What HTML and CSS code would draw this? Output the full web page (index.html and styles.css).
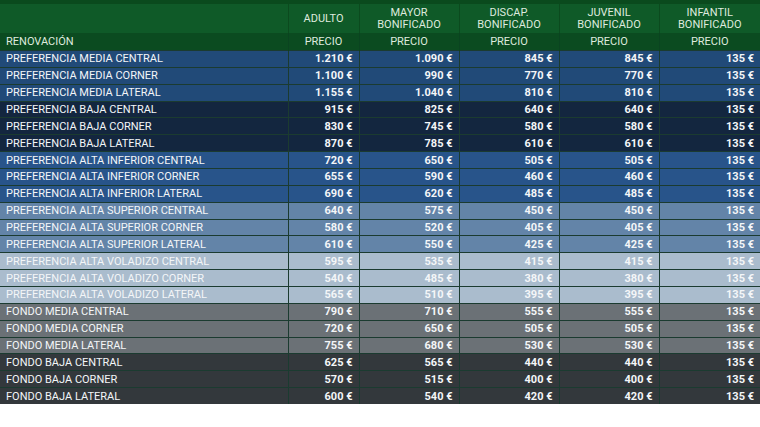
FILE: index.html
```html
<!DOCTYPE html>
<html lang="es">
<head>
<meta charset="utf-8">
<title>Precios renovación</title>
<link rel="stylesheet" href="styles.css">
</head>
<body>
<table class="prices">
  <colgroup>
    <col class="c-name"><col class="c-a"><col class="c-b"><col class="c-b"><col class="c-b"><col class="c-last">
  </colgroup>
  <thead>
    <tr class="h1">
      <th></th><th>ADULTO</th><th>MAYOR<br>BONIFICADO</th><th>DISCAP.<br>BONIFICADO</th><th>JUVENIL<br>BONIFICADO</th><th>INFANTIL<br>BONIFICADO</th>
    </tr>
    <tr class="h2">
      <th class="name">RENOVACIÓN</th><th>PRECIO</th><th>PRECIO</th><th>PRECIO</th><th>PRECIO</th><th>PRECIO</th>
    </tr>
  </thead>
  <tbody>
    <tr class="g1"><td>PREFERENCIA MEDIA CENTRAL</td><td>1.210 €</td><td>1.090 €</td><td>845 €</td><td>845 €</td><td>135 €</td></tr>
    <tr class="g1"><td>PREFERENCIA MEDIA CORNER</td><td>1.100 €</td><td>990 €</td><td>770 €</td><td>770 €</td><td>135 €</td></tr>
    <tr class="g1"><td>PREFERENCIA MEDIA LATERAL</td><td>1.155 €</td><td>1.040 €</td><td>810 €</td><td>810 €</td><td>135 €</td></tr>
    <tr class="g2"><td>PREFERENCIA BAJA CENTRAL</td><td>915 €</td><td>825 €</td><td>640 €</td><td>640 €</td><td>135 €</td></tr>
    <tr class="g2"><td>PREFERENCIA BAJA CORNER</td><td>830 €</td><td>745 €</td><td>580 €</td><td>580 €</td><td>135 €</td></tr>
    <tr class="g2"><td>PREFERENCIA BAJA LATERAL</td><td>870 €</td><td>785 €</td><td>610 €</td><td>610 €</td><td>135 €</td></tr>
    <tr class="g3"><td>PREFERENCIA ALTA INFERIOR CENTRAL</td><td>720 €</td><td>650 €</td><td>505 €</td><td>505 €</td><td>135 €</td></tr>
    <tr class="g3"><td>PREFERENCIA ALTA INFERIOR CORNER</td><td>655 €</td><td>590 €</td><td>460 €</td><td>460 €</td><td>135 €</td></tr>
    <tr class="g3"><td>PREFERENCIA ALTA INFERIOR LATERAL</td><td>690 €</td><td>620 €</td><td>485 €</td><td>485 €</td><td>135 €</td></tr>
    <tr class="g4"><td>PREFERENCIA ALTA SUPERIOR CENTRAL</td><td>640 €</td><td>575 €</td><td>450 €</td><td>450 €</td><td>135 €</td></tr>
    <tr class="g4"><td>PREFERENCIA ALTA SUPERIOR CORNER</td><td>580 €</td><td>520 €</td><td>405 €</td><td>405 €</td><td>135 €</td></tr>
    <tr class="g4"><td>PREFERENCIA ALTA SUPERIOR LATERAL</td><td>610 €</td><td>550 €</td><td>425 €</td><td>425 €</td><td>135 €</td></tr>
    <tr class="g5"><td>PREFERENCIA ALTA VOLADIZO CENTRAL</td><td>595 €</td><td>535 €</td><td>415 €</td><td>415 €</td><td>135 €</td></tr>
    <tr class="g5"><td>PREFERENCIA ALTA VOLADIZO CORNER</td><td>540 €</td><td>485 €</td><td>380 €</td><td>380 €</td><td>135 €</td></tr>
    <tr class="g5"><td>PREFERENCIA ALTA VOLADIZO LATERAL</td><td>565 €</td><td>510 €</td><td>395 €</td><td>395 €</td><td>135 €</td></tr>
    <tr class="g6"><td>FONDO MEDIA CENTRAL</td><td>790 €</td><td>710 €</td><td>555 €</td><td>555 €</td><td>135 €</td></tr>
    <tr class="g6"><td>FONDO MEDIA CORNER</td><td>720 €</td><td>650 €</td><td>505 €</td><td>505 €</td><td>135 €</td></tr>
    <tr class="g6"><td>FONDO MEDIA LATERAL</td><td>755 €</td><td>680 €</td><td>530 €</td><td>530 €</td><td>135 €</td></tr>
    <tr class="g7"><td>FONDO BAJA CENTRAL</td><td>625 €</td><td>565 €</td><td>440 €</td><td>440 €</td><td>135 €</td></tr>
    <tr class="g7"><td>FONDO BAJA CORNER</td><td>570 €</td><td>515 €</td><td>400 €</td><td>400 €</td><td>135 €</td></tr>
    <tr class="g7"><td>FONDO BAJA LATERAL</td><td>600 €</td><td>540 €</td><td>420 €</td><td>420 €</td><td>135 €</td></tr>
  </tbody>
</table>
</body>
</html>
```
FILE: styles.css
```css
html, body {
  margin: 0;
  padding: 0;
  background: #ffffff;
}
body {
  font-family: Roboto, "Liberation Sans", sans-serif;
  font-size: 11px;
  color: #f4f6f8;
}
.prices {
  width: 760px;
  border-collapse: collapse;
  table-layout: fixed;
  border-top: 4px solid #0a4a1d;
}
.c-name { width: 288px; }
.c-a { width: 71px; }
.c-b { width: 100px; }
.c-last { width: 101px; }

.prices th {
  font-weight: 400;
  color: #dfeadf;
  text-align: center;
  vertical-align: middle;
  line-height: 12px;
  padding: 0;
  border-left: 1px solid #0b4a1e;
}
.prices th:first-child { border-left: none; }
.h1 th {
  height: 29px;
  background: #0f5a28;
}
.h2 th {
  height: 17px;
  background: #0b4b20;
  border-left-color: #0a4420;
}
.h2 th.name {
  text-align: left;
  padding-left: 6px;
}

.prices td {
  height: 15.86px;
  padding: 0 6px;
  line-height: 15px;
  border-top: 1px solid #1b3b30;
  border-left: 1px solid #1b3b30;
  text-align: right;
  font-weight: 700;
  white-space: nowrap;
}
.prices td:first-child {
  text-align: left;
  font-weight: 400;
  border-left: none;
}

.g1 td { background: #214a78; }
.g2 td { background: #13263f; }
.g3 td { background: #28548a; }
.g4 td { background: #6384a8; }
.g5 td { background: #aabccd; }
.g6 td { background: #6b7176; }
.g7 td { background: #33383c; }
```
